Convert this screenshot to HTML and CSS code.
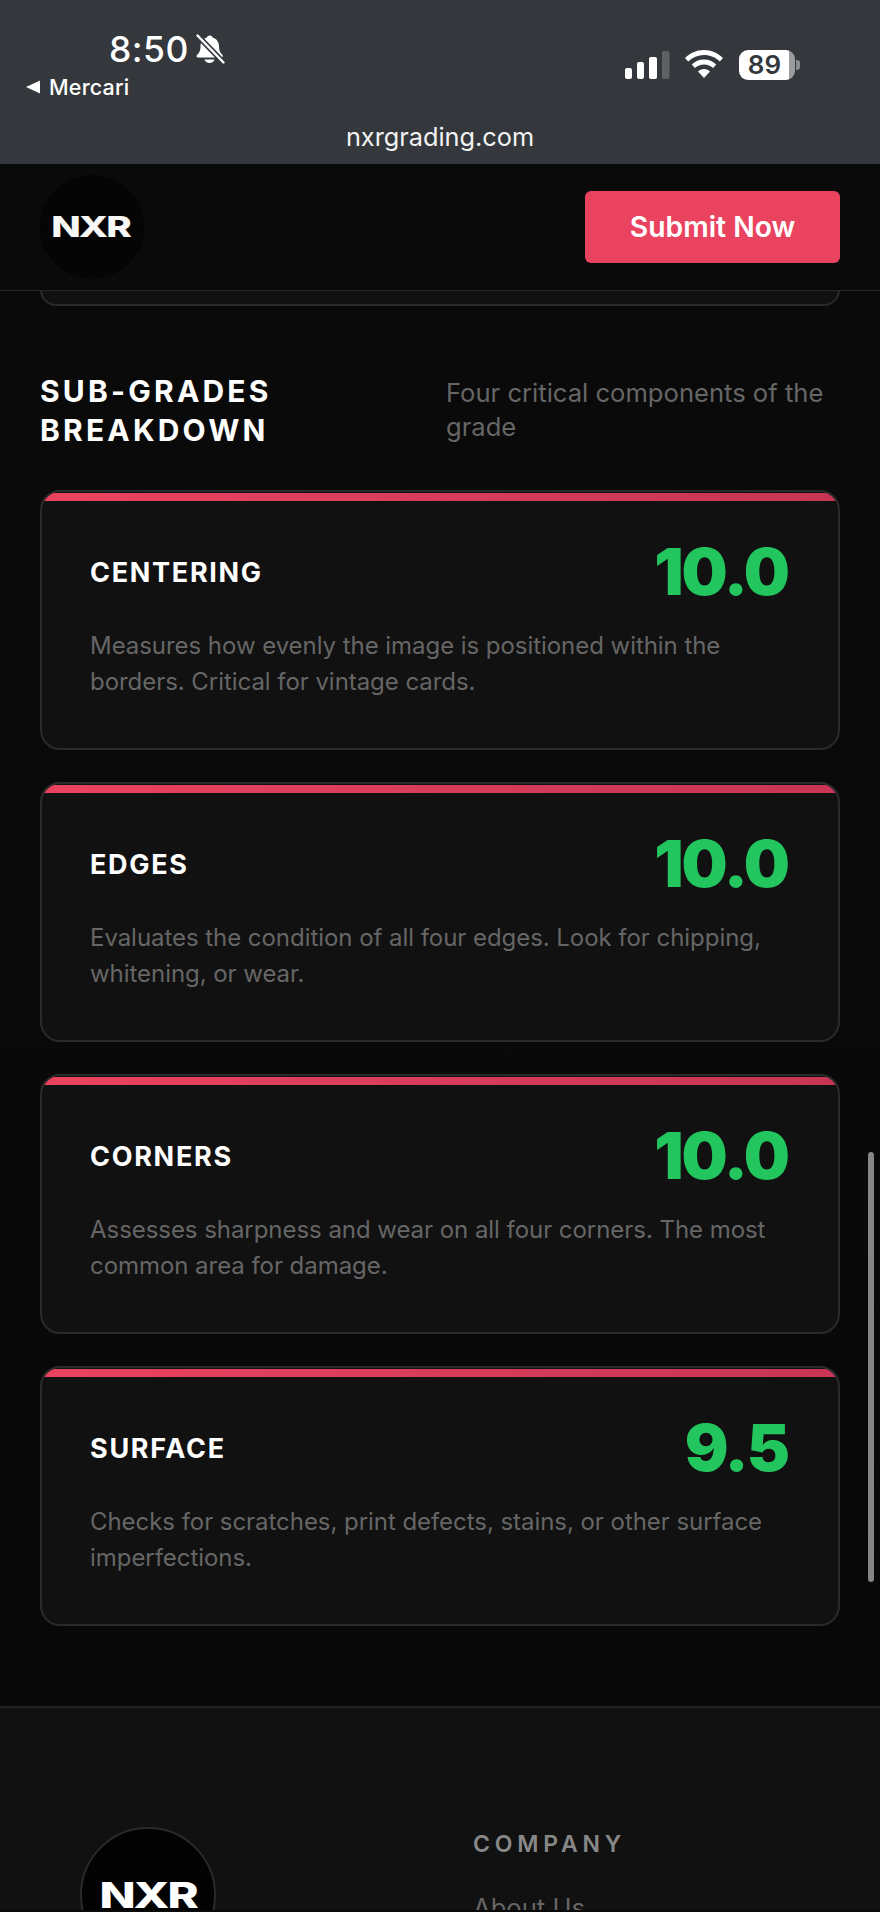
FILE: index.html
```html
<!DOCTYPE html>
<html lang="en">
<head>
<meta charset="utf-8">
<title>NXR Grading</title>
<link rel="stylesheet" href="styles.css">
</head>
<body>
<div class="browser-bar">
  <div class="status-row">
    <div class="status-left">
      <div class="time-row">
        <span class="time">8:50</span>
        <svg class="bell" viewBox="0 0 30 30" width="30" height="30"><path fill="#fff" d="M15 1.500c1.500 0 2.500 1 2.500 2 4 1 6.500 4.500 6.500 9 0 4 1 6 3.500 8.500.8 1 .2 2.500-1 2.500H3c-1.500 0-2-1.500-1-2.500 2.500-2.500 3.500-4.500 3.500-8.500 0-4.500 2.500-8 6.500-9 0-1 1-2 3-2z"/><path fill="#fff" d="M9.500 25.500h10c-.5 2.200-2.500 3.500-5 3.500s-4.500-1.300-5-3.500z"/><path stroke="#34383c" stroke-width="5.500" d="M0 -1l30 31"/><path stroke="#fff" stroke-width="2.400" stroke-linecap="round" d="M2.500 1.500l26 27"/></svg>
      </div>
      <div class="back-row">
        <svg class="back-tri" viewBox="0 0 14 14" width="14" height="14"><path fill="#fff" d="M0 7 14 .5v13z"/></svg>
        <span class="back-label">Mercari</span>
      </div>
    </div>
    <div class="status-right">
      <svg class="signal" viewBox="0 0 45 28" width="45" height="28">
        <rect x="0" y="17" width="7" height="11" rx="2" fill="#fff"/>
        <rect x="12" y="11" width="7" height="17" rx="2" fill="#fff"/>
        <rect x="24" y="6" width="8" height="22" rx="2" fill="#fff"/>
        <rect x="37" y="0" width="7.500" height="28" rx="2" fill="#5f6265"/>
      </svg>
      <svg class="wifi" viewBox="0 0 38 28" width="38" height="28"><path fill="#fff" d="M19 0c7.500 0 14 3 19 8l-3.200 3.500C30.500 7.300 25 5 19 5S7.500 7.300 3.200 11.500L0 8C5 3 11.500 0 19 0z"/><path fill="#fff" d="M19 9.500c4.800 0 9 1.900 12.300 5l-3.300 3.500c-2.400-2.200-5.500-3.500-9-3.500s-6.600 1.300-9 3.500l-3.300-3.500c3.300-3.100 7.500-5 12.300-5z"/><path fill="#fff" d="M19 19c2.400 0 4.500.9 6 2.400L19 28l-6-6.600c1.500-1.500 3.600-2.400 6-2.400z"/></svg>
      <div class="battery">
        <div class="battery-body"><span class="battery-text">89</span></div>
        <div class="battery-nub"></div>
      </div>
    </div>
  </div>
  <div class="url">nxrgrading.com</div>
</div>

<header class="site-header">
  <div class="logo-disc"><span class="logo-text">NXR</span></div>
  <a class="cta">Submit Now</a>
</header>

<main class="content">
  <div class="stub-card"></div>
  <div class="section-head">
    <h2 class="section-title">SUB-GRADES BREAKDOWN</h2>
    <p class="section-sub">Four critical components of the grade</p>
  </div>
  <div class="cards">
    <article class="card">
      <div class="card-top"><h3 class="card-title">CENTERING</h3><span class="card-score">10.0</span></div>
      <p class="card-desc">Measures how evenly the image is positioned within the borders. Critical for vintage cards.</p>
    </article>
    <article class="card">
      <div class="card-top"><h3 class="card-title">EDGES</h3><span class="card-score">10.0</span></div>
      <p class="card-desc">Evaluates the condition of all four edges. Look for chipping, whitening, or wear.</p>
    </article>
    <article class="card">
      <div class="card-top"><h3 class="card-title">CORNERS</h3><span class="card-score">10.0</span></div>
      <p class="card-desc">Assesses sharpness and wear on all four corners. The most common area for damage.</p>
    </article>
    <article class="card">
      <div class="card-top"><h3 class="card-title">SURFACE</h3><span class="card-score">9.5</span></div>
      <p class="card-desc">Checks for scratches, print defects, stains, or other surface imperfections.</p>
    </article>
  </div>
</main>

<footer class="site-footer">
  <div class="footer-brand">
    <div class="footer-disc"><span class="footer-logo-text">NXR</span></div>
  </div>
  <div class="footer-col">
    <h4 class="footer-heading">COMPANY</h4>
    <a class="footer-link">About Us</a>
  </div>
</footer>

<div class="scroll-thumb"></div>
</body>
</html>
```
FILE: styles.css
```css
* { box-sizing: border-box; }
html, body { margin: 0; padding: 0; height: 1912px; overflow: hidden; }
body {
  position: relative;
  background: #0a0a0a;
  color: #fff;
  font-family: Inter, "Liberation Sans", sans-serif;
}

/* iOS bar */
.browser-bar {
  height: 164px;
  background: #34383c;
  padding-top: 30px;
  display: flex;
  flex-direction: column;
}
.status-row { display: flex; justify-content: space-between; height: 86px; padding: 0 80px 0 26px; }
.status-left { display: flex; flex-direction: column; }
.time-row { display: flex; align-items: center; gap: 6px; padding-left: 83px; height: 40px; }
.time { font-size: 35.500px; font-weight: 500; line-height: 40px; letter-spacing: .5px; }
.bell { display: block; margin-top: -2px; }
.back-row { display: flex; align-items: center; gap: 9px; margin-top: 2px; height: 30px; }
.back-tri { display: block; }
.back-label { font-size: 21.500px; font-weight: 500; letter-spacing: .2px; }
.status-right { display: flex; align-items: flex-start; padding-top: 20px; }
.signal { display: block; margin-top: 1px; }
.wifi { display: block; margin: 0 0 0 15px; }
.battery { display: flex; align-items: center; margin-left: 16px; height: 30px; }
.battery-body {
  width: 56px; height: 30px; border-radius: 9px;
  background: linear-gradient(90deg, #fff 0, #fff 50px, #9a9c9e 50px);
  display: flex; align-items: center; justify-content: center; padding-right: 5px;
}
.battery-text { color: #34383c; font-size: 26px; font-weight: 600; line-height: 30px; }
.battery-nub { width: 4px; height: 10px; margin-left: 1px; border-radius: 0 3px 3px 0; background: #8b8d8f; }
.url { text-align: center; font-size: 25.300px; line-height: 30px; margin-top: 6px; color: #f2f2f2; }

/* site header */
.site-header {
  height: 127px;
  background: #0a0a0a;
  border-bottom: 1px solid #262626;
  padding: 0 40px;
  display: flex;
  align-items: center;
  justify-content: space-between;
  position: relative;
  z-index: 1;
}
.logo-disc {
  width: 104px; height: 104px; border-radius: 50%;
  background: #050505;
  display: flex; align-items: center; justify-content: center;
  margin-top: -1px;
}
.logo-text { font-size: 29px; font-weight: 800; line-height: 1; color: #f7f7f5; transform: translateX(-2px) scaleX(1.33); letter-spacing: -1.500px; }
.cta {
  width: 255px; height: 72px; border-radius: 6px;
  background: #ea4360; color: #fff;
  font-size: 28.300px; font-weight: 600;
  display: flex; align-items: center; justify-content: center;
  margin-top: -1px;
}

/* main */
.content { padding: 0 40px 80px; background: linear-gradient(#0a0a0a, #080808); }
.stub-card {
  height: 16px; margin-top: -1px;
  background: #111;
  border: 2px solid #2a2a2a; border-top: 0;
  border-radius: 0 0 20px 20px;
}
.section-head { display: grid; grid-template-columns: 406px 1fr; padding-top: 66px; }
.section-title { margin: 0; font-size: 30px; line-height: 39px; font-weight: 700; letter-spacing: 3.200px; width: 300px; }
.section-sub { margin: 0; padding-top: 4px; font-size: 25.600px; line-height: 34px; color: #666; }
.cards { display: flex; flex-direction: column; gap: 32px; margin-top: 40px; }
.card {
  height: 260px;
  background: #111;
  border: 2px solid #2a2a2a;
  border-radius: 20px;
  overflow: hidden;
  padding: 0 48px;
}
.card::before {
  content: "";
  display: block;
  height: 8px;
  margin: 1px -48px 0;
  background: linear-gradient(90deg, #ea4360, #c73555);
}
.card-top { display: flex; justify-content: space-between; align-items: center; margin-top: 33px; height: 76px; padding-right: 2px; }
.card-title { margin: 0; font-size: 27px; font-weight: 700; letter-spacing: 1.700px; }
.card-score { font-size: 65px; font-weight: 900; line-height: 76px; color: #22c55e; letter-spacing: -2px; }
.card-desc { margin: 18px 0 0; font-size: 24px; line-height: 36px; color: #666; letter-spacing: -.05px; }

/* footer */
.site-footer {
  background: #111;
  border-top: 2px solid #222;
  padding: 119px 0 0 80px;
  display: grid;
  grid-template-columns: 393px 1fr;
  height: 204px;
  overflow: hidden;
}
.footer-disc {
  width: 136px; height: 136px; border-radius: 50%;
  background: #020202; border: 2px solid #2a2a2a;
  display: flex; align-items: center; justify-content: center;
}
.footer-logo-text { font-size: 35px; font-weight: 800; line-height: 1; color: #fff; transform: scaleX(1.35); letter-spacing: -1.500px; }
.footer-heading { margin: 0; font-size: 23px; line-height: 28px; font-weight: 600; letter-spacing: 4.800px; color: #888; padding-top: 3px; }
.footer-link { display: block; margin-top: 34px; font-size: 25.600px; line-height: 32px; color: #666; }

/* overlay scrollbar */
.scroll-thumb {
  position: absolute; left: 868px; top: 1152px;
  width: 6px; height: 430px; border-radius: 3px;
  background: #858585;
}
```
